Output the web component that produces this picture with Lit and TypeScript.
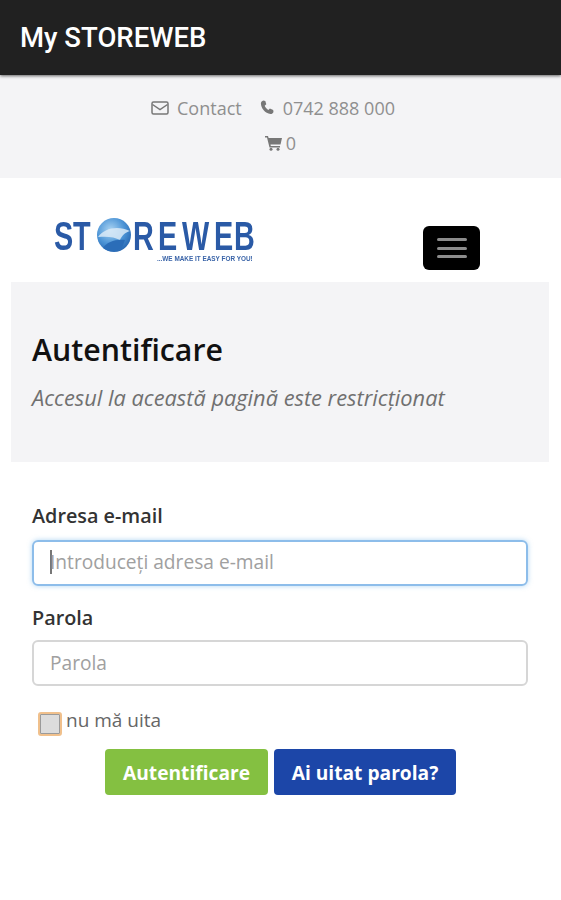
import { html, LitElement, css } from 'lit';
import { customElement } from 'lit/decorators.js';

const LOGO_SCALE = 0.72;
// letter positions in logo pixels, divided by the horizontal squeeze of the word
const logoX = (xs: number[]) => xs.map((x) => (x / LOGO_SCALE).toFixed(1)).join(' ');

@customElement('app-root')
export class AppRoot extends LitElement {
  static styles = css`
    :host {
      display: block;
      height: 900px;
      background: #fff;
      font-family: 'Open Sans', sans-serif;
      overflow: hidden;
    }
    .appbar {
      height: 75px;
      background: #212121;
      box-shadow: 0 1px 3px rgba(0, 0, 0, 0.6);
      display: flex;
      align-items: center;
      padding-left: 20px;
      position: relative;
      font-family: Roboto, sans-serif;
      font-weight: 500;
      font-size: 27.5px;
      color: #fff;
    }
    .topbar {
      height: 103px;
      background: #f4f4f6;
      box-sizing: border-box;
      padding-top: 19px;
      color: #8f8f8f;
      font-size: 18px;
    }
    .topline {
      display: flex;
      justify-content: center;
      align-items: center;
      height: 27px;
      gap: 18px;
      padding-right: 15px;
    }
    .topline.cart {
      margin-top: 8px;
      gap: 4px;
      padding-right: 0;
    }
    .item {
      display: flex;
      align-items: center;
      gap: 8px;
    }
    .item.phone {
      gap: 9px;
    }
    .icon {
      display: block;
      color: #777;
    }
    .brand {
      height: 104px;
      display: flex;
      align-items: flex-start;
      justify-content: space-between;
      padding: 37px 81px 0 54px;
      box-sizing: border-box;
    }
    .logo {
      display: block;
      filter: blur(0.5px);
    }
    .logo text {
      font-family: 'Liberation Sans', sans-serif;
      font-weight: 700;
    }
    .word {
      font-size: 40px;
      fill: #2a5aa6;
    }
    .tagline {
      font-size: 6.4px;
      fill: #3a64a8;
    }
    .burger {
      width: 57px;
      height: 44px;
      margin-top: 11px;
      background: #000;
      border-radius: 6px;
      display: flex;
      flex-direction: column;
      justify-content: center;
      align-items: center;
      gap: 5.5px;
    }
    .burger span {
      width: 30px;
      height: 3px;
      border-radius: 2px;
      background: #8c8c8c;
    }
    .jumbo {
      margin: 0 12px 0 11px;
      height: 180px;
      box-sizing: border-box;
      background: #f4f4f6;
      padding: 47px 21px 0;
    }
    h1 {
      margin: 0;
      font-size: 30.3px;
      line-height: 42px;
      font-weight: 600;
      color: #111;
    }
    .lead {
      margin: 12px 0 0;
      font-size: 21.8px;
      line-height: 30px;
      font-style: italic;
      color: #707070;
    }
    form {
      display: block;
      padding: 41px 33px 0 32px;
    }
    label.title {
      display: block;
      font-size: 19.8px;
      font-weight: 600;
      line-height: 26px;
      color: #333;
      margin-bottom: 11px;
    }
    .field {
      height: 46px;
      box-sizing: border-box;
      border: 2px solid #d6d6d6;
      border-radius: 6px;
      display: flex;
      align-items: center;
      padding-left: 16px;
      font-size: 19.15px;
      color: #a0a0a0;
      margin-bottom: 19px;
    }
    .field.focus {
      border-color: #8dbdea;
      box-shadow: 0 0 5px rgba(102, 175, 233, 0.5);
      padding-bottom: 2px;
    }
    .caret {
      width: 2px;
      height: 24px;
      background: #777;
      margin-right: -2px;
    }
    .field + label.title {
      margin-bottom: 9px;
    }
    .remember {
      display: flex;
      align-items: flex-start;
      gap: 4px;
      margin: 23px 0 0 6px;
      font-size: 19px;
      line-height: 24px;
      color: #666;
      height: 40px;
    }
    .check {
      width: 24px;
      height: 24px;
      box-sizing: border-box;
      margin-top: 3px;
      border: 2px solid #f0c08c;
      border-radius: 3px;
      background: #dcdcdc;
      box-shadow: inset 0 0 0 1px #9a9a9a;
    }
    .remember span {
      margin-top: -1px;
    }
    .actions {
      display: flex;
      gap: 6px;
      margin-left: 73px;
    }
    .btn {
      height: 46px;
      border-radius: 4px;
      display: flex;
      align-items: center;
      justify-content: center;
      color: #fff;
      font-size: 19.2px;
      font-weight: 700;
    }
    .login {
      width: 163px;
      background: #84c041;
    }
    .forgot {
      width: 182px;
      background: #1c46a8;
    }
  `;

  render() {
    return html`
      <div class="appbar">My STOREWEB</div>
      <div class="topbar">
        <div class="topline">
          <div class="item">
            <svg class="icon" width="18" height="14" viewBox="0 0 18 14" fill="none" stroke="currentColor" stroke-width="1.5">
              <rect x="1" y="1" width="16" height="12" rx="1.5"></rect>
              <path d="M1.5 3.5L9 8.5l7.5-5"></path>
            </svg>
            <span>Contact</span>
          </div>
          <div class="item phone">
            <svg class="icon" width="14" height="15" viewBox="0 0 14 15">
              <path fill="currentColor" d="M3.3 0.5l2 .4 1 3.4-1.600 1.400c.6 1.700 1.900 3.200 3.600 4.200l1.600-1.300 3.300 1.300.3 2c-.5 1.200-1.700 2.300-3 2.200C5.200 13.400 1 8.400.9 3.300.9 2 2 1 3.300.5z"></path>
            </svg>
            <span>0742 888 000</span>
          </div>
        </div>
        <div class="topline cart">
          <svg class="icon" width="17" height="16" viewBox="0 0 17 16">
            <path fill="currentColor" d="M0 1h3l.6 2H17l-1.500 6.500H5.500l.3 1.500h9.200v1.500H4.500L2 2.500H0z"></path>
            <circle fill="currentColor" cx="6" cy="14.3" r="1.5"></circle>
            <circle fill="currentColor" cx="13" cy="14.3" r="1.5"></circle>
          </svg>
          <span>0</span>
        </div>
      </div>
      <div class="brand">
        <svg class="logo" width="202" height="52" viewBox="0 0 202 52">
          <defs>
            <radialGradient id="globe" cx="0.4" cy="0.35" r="0.75">
              <stop offset="0" stop-color="#a9d3f2"></stop>
              <stop offset="0.55" stop-color="#4c94d6"></stop>
              <stop offset="1" stop-color="#1f5ca8"></stop>
            </radialGradient>
          </defs>
          <text class="word" transform="translate(0 35) scale(${LOGO_SCALE} 1)" x=${logoX([0, 19])} y="0">ST</text>
          <text class="word" transform="translate(0 35) scale(${LOGO_SCALE} 1)" x=${logoX([79, 104, 128, 160, 180])} y="0">REWEB</text>
          <circle cx="60" cy="20" r="17" fill="url(#globe)"></circle>
          <path d="M44 22c6-9 20-12 32-6-4 1-8 4-10 9-5-3-13-4-22-3z" fill="#dbeaf7" opacity="0.85"></path>
          <path d="M49 33c4-6 12-9 22-8l-3 8c-6 4-14 4-19 0z" fill="#2b6db8"></path>
          <text class="tagline" x="103" y="46">...WE MAKE IT EASY FOR YOU!</text>
        </svg>
        <div class="burger"><span></span><span></span><span></span></div>
      </div>
      <div class="jumbo">
        <h1>Autentificare</h1>
        <p class="lead">Accesul la această pagină este restricționat</p>
      </div>
      <form>
        <label class="title">Adresa e-mail</label>
        <div class="field focus"><i class="caret"></i>Introduceți adresa e-mail</div>
        <label class="title">Parola</label>
        <div class="field">Parola</div>
        <div class="remember"><i class="check"></i><span>nu mă uita</span></div>
        <div class="actions">
          <div class="btn login">Autentificare</div>
          <div class="btn forgot">Ai uitat parola?</div>
        </div>
      </form>
    `;
  }
}
